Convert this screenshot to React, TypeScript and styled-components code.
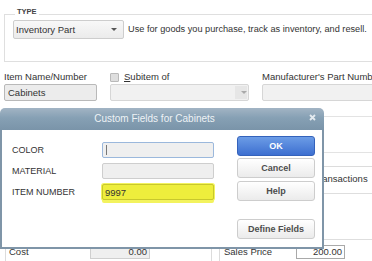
import styled, { createGlobalStyle } from "styled-components";

const Global = createGlobalStyle`
  html, body {
    margin: 0;
    padding: 0;
    background: #fff;
  }
  body {
    font-family: "Liberation Sans", Arial, sans-serif;
    color: #333;
  }
`;

const customFields = [
  { label: "COLOR", value: "", tone: "focus" },
  { label: "MATERIAL", value: "", tone: "plain" },
  { label: "ITEM NUMBER", value: "9997", tone: "highlight" },
] as const;

type Tone = (typeof customFields)[number]["tone"];

const App = () => (
  <>
    <Global />
    <S.Page>
      <S.Form>
        <S.TypeBox>
          <S.Legend>TYPE</S.Legend>
          <S.Select>
            Inventory Part
            <S.Arrow />
          </S.Select>
          <S.TypeHint>
            Use for goods you purchase, track as inventory, and resell.
          </S.TypeHint>
        </S.TypeBox>

        <S.ItemGrid>
          <S.Label>Item Name/Number</S.Label>
          <S.Label>
            <S.Check />
            <span>
              <u>S</u>ubitem of
            </span>
          </S.Label>
          <S.Label>Manufacturer's Part Number</S.Label>
          <S.Field $width={93}>Cabinets</S.Field>
          <S.Field $width={139} $muted>
            <S.ArrowCap>
              <S.Arrow $light />
            </S.ArrowCap>
          </S.Field>
          <S.Field $width={160} $muted />
        </S.ItemGrid>

        <S.UnitBox />

        <S.Groups>
          <S.Group $width={207} $pad={3}>
            <S.GroupLabel>&nbsp;</S.GroupLabel>
            <S.Memo />
            <S.PriceRow>
              <S.PriceLabel $width={81}>Cost</S.PriceLabel>
              <S.PriceField $width={60} $muted>
                0.00
              </S.PriceField>
            </S.PriceRow>
          </S.Group>
          <S.Group $width={300} $pad={4}>
            <S.GroupLabel>Description on Sales Transactions</S.GroupLabel>
            <S.Memo />
            <S.PriceRow>
              <S.PriceLabel $width={72}>Sales Price</S.PriceLabel>
              <S.PriceField $width={49}>200.00</S.PriceField>
            </S.PriceRow>
          </S.Group>
        </S.Groups>
      </S.Form>

      <S.Dialog>
        <S.TitleBar>
          <S.Title>Custom Fields for Cabinets</S.Title>
          <S.Close viewBox="0 0 7 7">
            <path d="M1 1 L6 6 M6 1 L1 6" />
          </S.Close>
        </S.TitleBar>
        <S.Body>
          <S.Fields>
            {customFields.map((f) => (
              <S.FieldRow key={f.label}>
                <S.FieldLabel>{f.label}</S.FieldLabel>
                <S.CustomInput $tone={f.tone}>
                  {f.tone === "focus" && <S.Caret />}
                  {f.value}
                </S.CustomInput>
              </S.FieldRow>
            ))}
          </S.Fields>
          <S.Buttons>
            <S.Button $primary>OK</S.Button>
            <S.Button $gap={2}>Cancel</S.Button>
            <S.Button $gap={3}>Help</S.Button>
            <S.Button $gap={18}>Define Fields</S.Button>
          </S.Buttons>
        </S.Body>
      </S.Dialog>
    </S.Page>
  </>
);

export default App;

const S = {
  Page: styled.div`
    position: relative;
    width: 372px;
    height: 261px;
    overflow: hidden;
    background: #fff;
    font-size: 9.5px;
  `,

  Form: styled.div`
    display: flex;
    flex-direction: column;
    width: 540px;
  `,

  TypeBox: styled.fieldset`
    margin: 8px 0 0 4px;
    padding: 0 8px 22px;
    border: 1px solid #dfdfdf;
    display: flex;
    align-items: flex-start;
    gap: 4px;
    min-width: 0;
  `,

  Legend: styled.legend`
    margin-left: 2px;
    padding: 0 2px 4px;
    font-size: 7.5px;
    line-height: 8px;
    font-weight: bold;
    color: #444;
  `,

  Select: styled.div`
    position: relative;
    box-sizing: border-box;
    width: 111px;
    height: 19px;
    padding-left: 2px;
    border: 1px solid #cdcdcd;
    border-radius: 2px;
    background: linear-gradient(#f8f8f8, #ebebeb);
    display: flex;
    align-items: center;
    color: #333;
  `,

  Arrow: styled.span<{ $light?: boolean }>`
    margin-left: auto;
    margin-right: ${(p) => (p.$light ? "0" : "6px")};
    width: 0;
    height: 0;
    border-left: 3px solid transparent;
    border-right: 3px solid transparent;
    border-top: 3px solid ${(p) => (p.$light ? "#a9a9a9" : "#555")};
  `,

  TypeHint: styled.div`
    margin-top: 3px;
    font-size: 9.2px;
    line-height: 12px;
    white-space: nowrap;
    color: #333;
  `,

  ItemGrid: styled.div`
    display: grid;
    grid-template-columns: 106px 152px 200px;
    grid-template-rows: 10px 17px;
    row-gap: 2px;
    margin: 10px 0 0 4px;
  `,

  Label: styled.div`
    display: flex;
    align-items: center;
    gap: 5px;
    line-height: 10px;
    white-space: nowrap;
    color: #333;
  `,

  Check: styled.span`
    box-sizing: border-box;
    width: 9px;
    height: 9px;
    border: 1px solid #b9b9b9;
    border-radius: 1px;
    background: #dedede;
  `,

  Field: styled.div<{ $width: number; $muted?: boolean }>`
    box-sizing: border-box;
    width: ${(p) => p.$width}px;
    height: 17px;
    padding: 0 1px 0 3px;
    border: 1px solid ${(p) => (p.$muted ? "#d6d6d6" : "#b9b9b9")};
    border-radius: 2px;
    background: ${(p) => (p.$muted ? "#f1f1f1" : "#ececec")};
    display: flex;
    align-items: center;
    color: #333;
  `,

  ArrowCap: styled.span`
    margin-left: auto;
    width: 12px;
    height: 13px;
    background: #e6e6e6;
    display: flex;
    align-items: center;
    justify-content: center;
  `,

  UnitBox: styled.div`
    box-sizing: border-box;
    height: 37px;
    margin: 15px 0 0 4px;
    border: 1px solid #e3e3e3;
  `,

  Groups: styled.div`
    display: flex;
    gap: 7px;
    margin: 13px 0 0 5px;
  `,

  Group: styled.div<{ $width: number; $pad: number }>`
    box-sizing: border-box;
    flex-shrink: 0;
    width: ${(p) => p.$width}px;
    height: 120px;
    padding: 7px 0 0 ${(p) => p.$pad}px;
    border: 1px solid #dcdcdc;
    display: flex;
    flex-direction: column;
  `,

  GroupLabel: styled.div`
    line-height: 10px;
    white-space: nowrap;
    color: #333;
  `,

  Memo: styled.div`
    box-sizing: border-box;
    height: 47px;
    margin-top: 9px;
    border: 1px solid #dedede;
  `,

  PriceRow: styled.div`
    display: flex;
    align-items: center;
    height: 14px;
    margin-top: 5px;
  `,

  PriceLabel: styled.div<{ $width: number }>`
    width: ${(p) => p.$width}px;
    line-height: 10px;
    color: #333;
  `,

  PriceField: styled.div<{ $width: number; $muted?: boolean }>`
    box-sizing: border-box;
    width: ${(p) => p.$width}px;
    height: 14px;
    padding-right: 2px;
    border: 1px solid ${(p) => (p.$muted ? "#cfcfcf" : "#a9a9a9")};
    background: ${(p) => (p.$muted ? "#efefef" : "#fff")};
    text-align: right;
    line-height: 12px;
    color: #333;
  `,

  Dialog: styled.div`
    position: absolute;
    left: 0;
    top: 108px;
    width: 324px;
    display: flex;
    flex-direction: column;
  `,

  TitleBar: styled.div`
    height: 22px;
    border-radius: 5px 5px 0 0;
    background: linear-gradient(#a2b4c4, #86a0b4 45%, #7a94a9);
    display: flex;
    align-items: flex-start;
  `,

  Title: styled.div`
    flex: 1;
    text-align: center;
    font-size: 10px;
    line-height: 22px;
    color: #eef2f5;
  `,

  Close: styled.svg`
    width: 7px;
    height: 7px;
    margin: 6px 8px 0 0;
    fill: none;
    stroke: #e4eaef;
    stroke-width: 1.8;
  `,

  Body: styled.div`
    box-sizing: border-box;
    height: 119px;
    padding: 0 7px 0 10px;
    border: 2px solid #7f95a8;
    border-top: none;
    background: #fff;
    display: flex;
    align-items: flex-start;
  `,

  Fields: styled.div`
    margin-top: 12px;
    display: flex;
    flex-direction: column;
    gap: 5px;
  `,

  FieldRow: styled.div`
    display: grid;
    grid-template-columns: 90px 112px;
    align-items: center;
  `,

  FieldLabel: styled.div`
    font-size: 9px;
    color: #333;
  `,

  CustomInput: styled.div<{ $tone: Tone }>`
    box-sizing: border-box;
    height: 16px;
    padding-left: ${(p) => (p.$tone === "focus" ? "3px" : "2px")};
    border: 1px solid
      ${(p) =>
        p.$tone === "focus"
          ? "#9bb8dc"
          : p.$tone === "highlight"
          ? "#c8c82c"
          : "#cecece"};
    border-radius: 2px;
    background: ${(p) => (p.$tone === "highlight" ? "#eeee3c" : "#efefef")};
    box-shadow: ${(p) =>
      p.$tone === "highlight"
        ? "0 0 0 1px #f3f35e, 0 3px 0 0 #f3f35e"
        : "none"};
    display: flex;
    align-items: center;
    font-size: 9.5px;
    color: #333;
  `,

  Caret: styled.span`
    width: 1px;
    height: 10px;
    background: #777;
  `,

  Buttons: styled.div`
    margin: 6px 0 0 auto;
    width: 78px;
    display: flex;
    flex-direction: column;
  `,

  Button: styled.div<{ $primary?: boolean; $gap?: number }>`
    box-sizing: border-box;
    height: 20px;
    margin-top: ${(p) => p.$gap ?? 0}px;
    border: 1px solid ${(p) => (p.$primary ? "#3462bb" : "#cdcdcd")};
    border-radius: 3px;
    background: ${(p) =>
      p.$primary
        ? "linear-gradient(#6c9ce6, #3d6fd0)"
        : "linear-gradient(#ffffff, #ebebeb)"};
    display: flex;
    align-items: center;
    justify-content: center;
    font-size: 9px;
    font-weight: bold;
    color: ${(p) => (p.$primary ? "#fff" : "#4d4d4d")};
  `,
};
